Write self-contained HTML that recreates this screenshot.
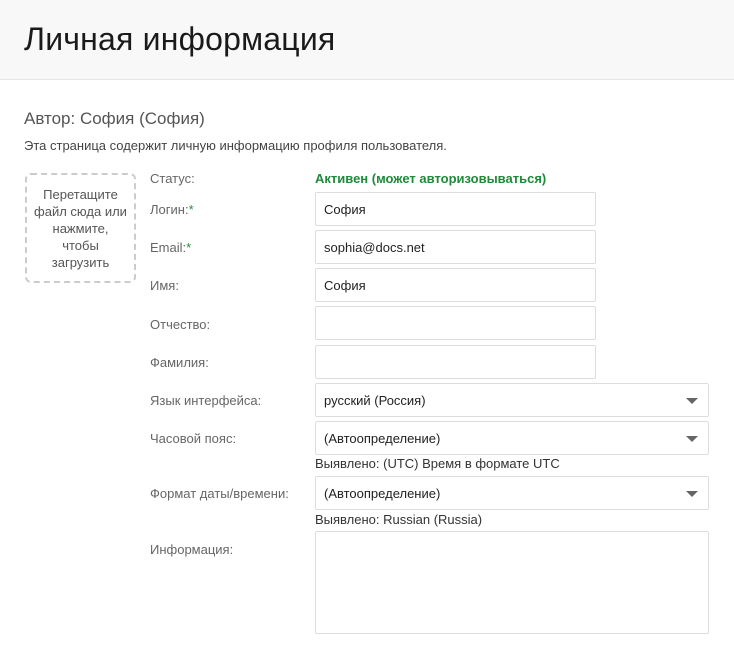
<!DOCTYPE html>
<html><head><meta charset="utf-8"><style>
*{box-sizing:border-box;margin:0;padding:0}
body{width:734px;height:657px;background:#fff;font-family:"Liberation Sans","Noto Sans CJK SC",sans-serif;color:#333;position:relative;overflow:hidden}
.hdr{position:absolute;left:0;top:0;width:734px;height:80px;background:#f8f8f8;border-bottom:1px solid #e6e6e6}
.hdr h1{position:absolute;left:24px;top:21px;font-size:32px;font-weight:normal;color:#1a1a1a;letter-spacing:0.2px}
.a{position:absolute;white-space:nowrap}
.lbl{font-size:13px;color:#666}
.in{position:absolute;border:1px solid #ddd;border-radius:2px;height:34px;font-size:13px;color:#222;padding:9px 8px;background:#fff}
.sel:after{content:"";position:absolute;right:10px;top:14px;border-left:6px solid transparent;border-right:6px solid transparent;border-top:6px solid #666}
.star{color:#2e8b3a}
.drop{position:absolute;left:25px;top:173px;width:111px;height:110px;border:2px dashed #ccc;border-radius:6px;font-size:13px;color:#555;text-align:center;line-height:17px;padding-top:11px}
</style></head><body>
<div class="hdr"><h1>Личная информация</h1></div>
<div class="a" style="left:24px;top:109px;font-size:17px;color:#555">Автор: София (София)</div>
<div class="a" style="left:24px;top:138px;font-size:13px;color:#444">Эта страница содержит личную информацию профиля пользователя.</div>
<div class="drop">Перетащите<br>файл сюда или<br>нажмите,<br>чтобы<br>загрузить</div>
<div class="a lbl" style="left:150px;top:171px">Статус:</div>
<div class="a" style="left:315px;top:171px;font-size:13px;color:#1f8a3a;font-weight:bold">Активен (может авторизовываться)</div>
<div class="a lbl" style="left:150px;top:202px">Логин:<span class="star">*</span></div>
<div class="in" style="left:315px;top:192px;width:281px">София</div>
<div class="a lbl" style="left:150px;top:240px">Email:<span class="star">*</span></div>
<div class="in" style="left:315px;top:230px;width:281px">sophia@docs.net</div>
<div class="a lbl" style="left:150px;top:278px">Имя:</div>
<div class="in" style="left:315px;top:268px;width:281px">София</div>
<div class="a lbl" style="left:150px;top:317px">Отчество:</div>
<div class="in" style="left:315px;top:306px;width:281px"></div>
<div class="a lbl" style="left:150px;top:355px">Фамилия:</div>
<div class="in" style="left:315px;top:345px;width:281px"></div>
<div class="a lbl" style="left:150px;top:393px">Язык интерфейса:</div>
<div class="in sel" style="left:315px;top:383px;width:394px">русский (Россия)</div>
<div class="a lbl" style="left:150px;top:431px">Часовой пояс:</div>
<div class="in sel" style="left:315px;top:421px;width:394px">(Автоопределение)</div>
<div class="a" style="left:315px;top:456px;font-size:13px;color:#333">Выявлено: (UTC) Время в формате UTC</div>
<div class="a lbl" style="left:150px;top:486px">Формат даты/времени:</div>
<div class="in sel" style="left:315px;top:476px;width:394px">(Автоопределение)</div>
<div class="a" style="left:315px;top:512px;font-size:13px;color:#333">Выявлено: Russian (Russia)</div>
<div class="a lbl" style="left:150px;top:542px">Информация:</div>
<div class="in" style="left:315px;top:531px;width:394px;height:103px"></div>
</body></html>
